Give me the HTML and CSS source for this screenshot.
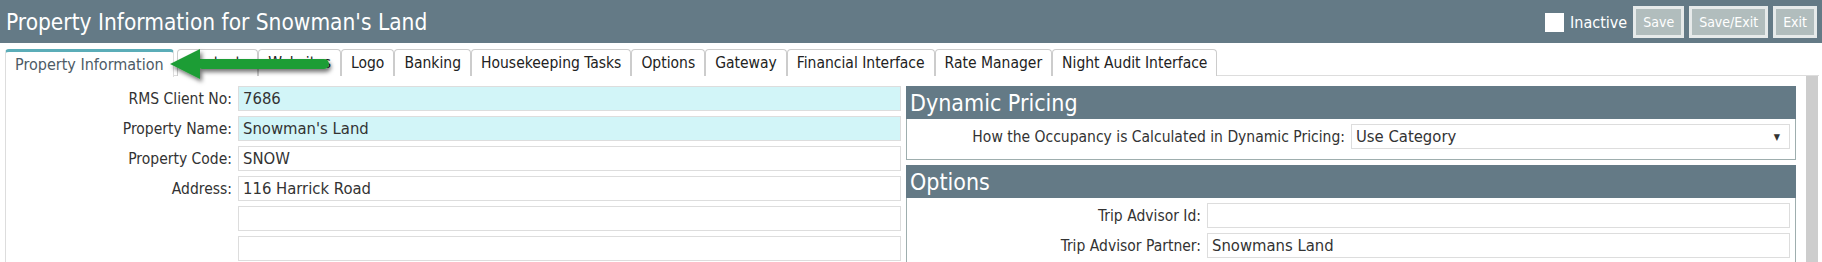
FILE: index.html
```html
<!DOCTYPE html>
<html lang="en">
<head>
  <meta charset="UTF-8" />
  <title>Property Information</title>
  <link rel="stylesheet" href="styles.css">
</head>
<body>

  <div class="topbar">
    <div class="title">Property Information for Snowman's Land</div>
    <div class="actions">
      <label class="inactive"><span class="check"></span>Inactive</label>
      <button class="btn">Save</button>
      <button class="btn">Save/Exit</button>
      <button class="btn">Exit</button>
    </div>
  </div>

  <div class="tabs">
    <div class="tab active">Property Information</div>
    <div class="tab">Contacts</div>
    <div class="tab">Websites</div>
    <div class="tab">Logo</div>
    <div class="tab">Banking</div>
    <div class="tab">Housekeeping Tasks</div>
    <div class="tab">Options</div>
    <div class="tab">Gateway</div>
    <div class="tab">Financial Interface</div>
    <div class="tab">Rate Manager</div>
    <div class="tab">Night Audit Interface</div>

    <!-- pointer arrow over the first tab -->
    <svg class="arrow" width="180" height="44" viewBox="0 0 180 44">
      <defs>
        <filter id="shade" x="-10%" y="-30%" width="130%" height="180%">
          <feDropShadow dx="2" dy="3" stdDeviation="2" flood-color="#000" flood-opacity="0.55"/>
        </filter>
      </defs>
      <g filter="url(#shade)">
        <line x1="36" y1="19" x2="158" y2="19" stroke="#1f9d34" stroke-width="10" stroke-linecap="round"/>
        <polygon points="4,19 34,4 34,34" fill="#1f9d34"/>
      </g>
    </svg>
  </div>

  <div class="content">
    <div class="col-left">
      <div class="field">
        <label>RMS Client No:</label>
        <input class="ro" type="text" value="7686">
      </div>
      <div class="field">
        <label>Property Name:</label>
        <input class="ro" type="text" value="Snowman's Land">
      </div>
      <div class="field">
        <label>Property Code:</label>
        <input type="text" value="SNOW">
      </div>
      <div class="field">
        <label>Address:</label>
        <input type="text" value="116 Harrick Road">
      </div>
      <div class="field">
        <label></label>
        <input type="text" value="">
      </div>
      <div class="field">
        <label></label>
        <input type="text" value="">
      </div>
    </div>

    <div class="col-right">
      <div class="panel">
        <div class="panel-head">Dynamic Pricing</div>
        <div class="panel-body">
          <div class="field wide">
            <label>How the Occupancy is Calculated in Dynamic Pricing:</label>
            <div class="select">Use Category<span class="caret">▼</span></div>
          </div>
        </div>
      </div>

      <div class="panel">
        <div class="panel-head">Options</div>
        <div class="panel-body">
          <div class="field mid">
            <label>Trip Advisor Id:</label>
            <input type="text" value="">
          </div>
          <div class="field mid">
            <label>Trip Advisor Partner:</label>
            <input type="text" value="Snowmans Land">
          </div>
        </div>
      </div>
    </div>

    <div class="scrollbar"></div>
  </div>

</body>
</html>
```

FILE: styles.css
```css
body {
  font-family: 'DejaVu Sans Condensed', 'DejaVu Sans', sans-serif;
  background-color: #ffffff;
  color: #333333;
  margin: 0;
  padding: 0;
  overflow: hidden;
}

/* Top bar */
.topbar {
  display: flex;
  align-items: center;
  justify-content: space-between;
  height: 43px;
  background-color: #647a86;
  padding: 0 5px 0 6px;
}

.title {
  color: #ffffff;
  font-size: 22.5px;
}

.actions {
  display: flex;
  align-items: center;
  gap: 5px;
  padding-top: 1px;
}

.inactive {
  display: flex;
  align-items: center;
  gap: 6px;
  color: #ffffff;
  font-size: 16px;
  margin-right: 1px;
}

.check {
  width: 19px;
  height: 19px;
  background: #ffffff;
}

.btn {
  height: 32px;
  padding: 0 7px;
  background: #b1bdbd;
  border: 3px solid #e6eaea;
  color: #ffffff;
  font-family: inherit;
  font-size: 14px;
}

/* Tabs */
.tabs {
  position: relative;
  display: flex;
  margin-top: 6px;
  padding-left: 5px;
  height: 27px;
  margin-bottom: -1px;
}

.tab {
  display: flex;
  align-items: center;
  padding: 0 9px;
  border: 1px solid #cccccc;
  border-bottom: none;
  border-radius: 4px 4px 0 0;
  font-size: 15.5px;
  color: #222222;
  background: #ffffff;
}

.tab.active {
  border-top: 3px solid #5badb8;
  border-color: #5badb8 #dddddd #ffffff #dddddd;
  color: #4d5b66;
  font-size: 16px;
  padding: 0 9px;
  margin-right: 3px;
  height: 28px;
  box-sizing: border-box;
}

.arrow {
  position: absolute;
  left: 166px;
  top: -4px;
}

/* Tab body */
.content {
  display: flex;
  margin-left: 5px;
  width: 1813px;
  border-top: 1px solid #dddddd;
  border-left: 1px solid #dddddd;
  height: 190px;
}

.col-left {
  width: 895px;
  padding-top: 10px;
  display: flex;
  flex-direction: column;
  gap: 5px;
}

.field {
  display: flex;
  align-items: center;
  gap: 6px;
}

.field label {
  width: 226px;
  text-align: right;
  font-size: 15.5px;
  color: #333333;
}

.field input,
.select {
  flex: 1;
  height: 25px;
  box-sizing: border-box;
  border: 1px solid #dddddd;
  padding: 0 4px;
  font-family: inherit;
  font-size: 16.5px;
  color: #333333;
  background: #ffffff;
}

.field input.ro {
  background: #d2f5f8;
}

.col-right {
  width: 890px;
  margin-left: 5px;
  padding-top: 10px;
  display: flex;
  flex-direction: column;
  gap: 5px;
}

.panel-head {
  background: #647a86;
  color: #ffffff;
  font-size: 23px;
  height: 33px;
  padding-left: 4px;
  display: flex;
  align-items: center;
}

.panel-body {
  border: 1px solid #9eaeae;
  border-top: none;
  padding: 5px 5px 10px 0;
  display: flex;
  flex-direction: column;
  gap: 5px;
}

.field.wide label {
  width: 438px;
}

.field.mid label {
  width: 294px;
}

.select {
  display: flex;
  align-items: center;
  justify-content: space-between;
}

.caret {
  font-size: 9px;
  color: #333333;
  padding-right: 5px;
}

.scrollbar {
  width: 12px;
  margin-left: 10px;
  background: #cdcdcd;
}
```
